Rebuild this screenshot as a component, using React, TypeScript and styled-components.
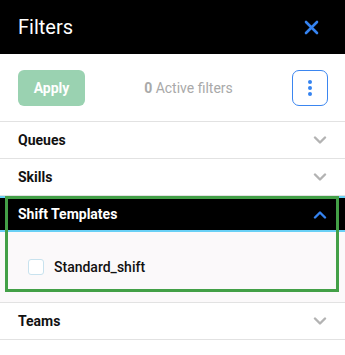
import React from "react";
import styled, { createGlobalStyle } from "styled-components";

const Global = createGlobalStyle`
  html, body { margin: 0; padding: 0; background: #fff; }
  body { font-family: Roboto, "Noto Sans", Arial, sans-serif; }
  * { box-sizing: border-box; }
`;

const Panel = styled.div`
  width: 345px;
  height: 355px;
  background: #fff;
  display: flex;
  flex-direction: column;
  overflow: hidden;
`;

const Header = styled.div`
  height: 54px;
  flex-shrink: 0;
  background: #000;
  display: flex;
  align-items: center;
  justify-content: space-between;
  padding: 0 26px 0 18px;
`;

const Title = styled.div`
  color: #fff;
  font-size: 20px;
  font-weight: 400;
`;

const CloseBtn = styled.button`
  border: 0;
  background: transparent;
  padding: 0;
  display: flex;
  cursor: pointer;
`;

const Toolbar = styled.div`
  display: flex;
  align-items: center;
  flex-shrink: 0;
  padding: 16px 17px 15px 18px;
  border-bottom: 1px solid #e2e2e2;
`;

const ApplyBtn = styled.button`
  width: 67px;
  height: 36px;
  border: 0;
  border-radius: 6px;
  background: #9ad2b1;
  color: #fff;
  font-family: inherit;
  font-size: 14px;
  font-weight: 700;
`;

const ActiveCount = styled.div`
  flex: 1;
  text-align: center;
  color: #a9a9a9;
  font-size: 14px;
  b { font-weight: 700; }
`;

const MenuBtn = styled.button`
  width: 36px;
  height: 36px;
  border: 1px solid #3b86f0;
  border-radius: 7px;
  background: #fff;
  display: flex;
  align-items: center;
  justify-content: center;
  padding: 0;
`;

const Item = styled.div<{ $open?: boolean }>`
  position: relative;
  flex-shrink: 0;
  border-bottom: 1px solid #e2e2e2;
  ${(p) => (p.$open ? "border-top: 2px solid #69d0f5;" : "")}
`;

const ItemHead = styled.div<{ $open?: boolean }>`
  height: ${(p) => (p.$open ? "34px" : "36px")};
  display: flex;
  align-items: center;
  justify-content: space-between;
  padding: 0 18px 0 18px;
  background: ${(p) => (p.$open ? "#000" : "#fff")};
  color: ${(p) => (p.$open ? "#fff" : "#111")};
  font-size: 14px;
  font-weight: 700;
  ${(p) => (p.$open ? "border-bottom: 2px solid #69d0f5;" : "")}
`;

const ItemBody = styled.div`
  height: 70px;
  background: #fbf9fa;
  display: flex;
  align-items: center;
  gap: 10px;
  padding: 0 0 0 28px;
`;

const Check = styled.span`
  width: 16px;
  height: 16px;
  border: 1px solid #c8e2ee;
  border-radius: 3px;
  background: #fff;
`;

const OptionLabel = styled.span`
  font-size: 14px;
  font-weight: 500;
  color: #111;
`;

const Highlight = styled.div`
  position: absolute;
  left: 5px;
  top: -2px;
  width: 334px;
  height: 96px;
  border: 3px solid #43a047;
  pointer-events: none;
`;

const Chevron = ({ up, color }: { up?: boolean; color: string }) => (
  <svg width="14" height="9" viewBox="0 0 14 9">
    <polyline
      points={up ? "2,7.5 7,2.5 12,7.5" : "2,1.5 7,6.5 12,1.5"}
      fill="none"
      stroke={color}
      strokeWidth="2.4"
      strokeLinecap="round"
      strokeLinejoin="round"
    />
  </svg>
);

const items = ["Queues", "Skills", "Shift Templates", "Teams"];

export default function App() {
  return (
    <Panel>
      <Global />
      <Header>
        <Title>Filters</Title>
        <CloseBtn aria-label="close">
          <svg width="15" height="15" viewBox="0 0 15 15">
            <path d="M2 2 L13 13 M13 2 L2 13" stroke="#3583f0" strokeWidth="2.6" strokeLinecap="round" />
          </svg>
        </CloseBtn>
      </Header>
      <Toolbar>
        <ApplyBtn>Apply</ApplyBtn>
        <ActiveCount>
          <b>0</b> Active filters
        </ActiveCount>
        <MenuBtn aria-label="more">
          <svg width="6" height="18" viewBox="0 0 6 18">
            <circle cx="3" cy="3" r="2" fill="#3583f0" />
            <circle cx="3" cy="9" r="2" fill="#3583f0" />
            <circle cx="3" cy="15" r="2" fill="#3583f0" />
          </svg>
        </MenuBtn>
      </Toolbar>
      {items.map((name) => {
        const open = name === "Shift Templates";
        return (
          <Item key={name} $open={open}>
            <ItemHead $open={open}>
              <span>{name}</span>
              <Chevron up={open} color={open ? "#3583f0" : "#b3b3b3"} />
            </ItemHead>
            {open && (
              <ItemBody>
                <Check />
                <OptionLabel>Standard_shift</OptionLabel>
              </ItemBody>
            )}
            {open && <Highlight />}
          </Item>
        );
      })}
    </Panel>
  );
}
